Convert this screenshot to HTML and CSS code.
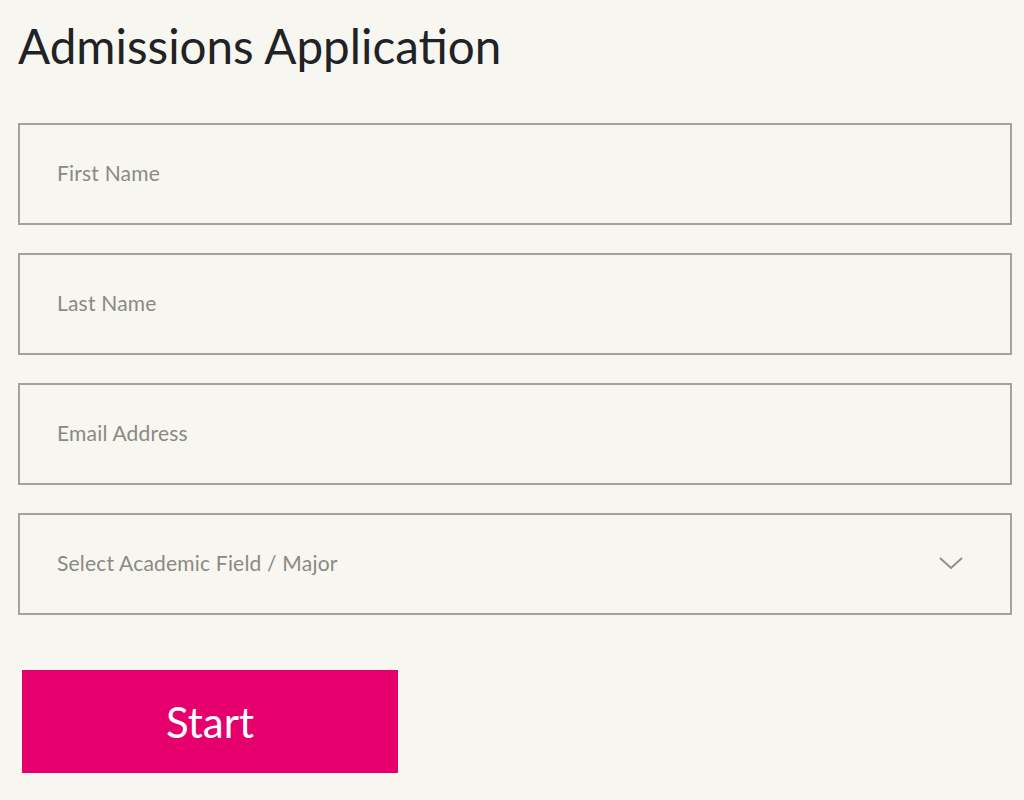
FILE: index.html
```html
<!DOCTYPE html>
<html lang="en">
<head>
<meta charset="utf-8">
<title>Admissions Application</title>
<link rel="stylesheet" href="styles.css">
</head>
<body>
<main class="page">
  <h1 class="title">Admissions Application</h1>
  <form class="form">
    <div class="field"><span class="placeholder">First Name</span></div>
    <div class="field"><span class="placeholder">Last Name</span></div>
    <div class="field"><span class="placeholder">Email Address</span></div>
    <div class="field select">
      <span class="placeholder">Select Academic Field / Major</span>
      <svg class="chevron" width="26" height="16" viewBox="0 0 26 16"><path d="M2 3 L13 13 L24 3" fill="none" stroke="#8f8f88" stroke-width="2"/></svg>
    </div>
    <button type="button" class="start">Start</button>
  </form>
</main>
</body>
</html>
```

FILE: styles.css
```css
html, body {
  margin: 0;
  padding: 0;
  background: #f7f6f0;
}
body {
  font-family: Lato, "Open Sans", sans-serif;
}
.page {
  padding: 18px 12px 0 18px;
}
.title {
  margin: 0;
  font-weight: 400;
  font-size: 47.6px;
  line-height: 56px;
  color: #1f2326;
}
.form {
  margin-top: 49px;
  display: flex;
  flex-direction: column;
  gap: 28px;
}
.field {
  box-sizing: border-box;
  height: 102px;
  border: 2px solid #a3a39b;
  display: flex;
  align-items: center;
  padding-left: 37px;
  padding-right: 46px;
  padding-bottom: 3px;
}
.placeholder {
  font-size: 21px;
  color: #8a8a82;
  letter-spacing: 0.2px;
}
.select {
  justify-content: space-between;
}
.chevron {
  display: block;
  margin-top: 1px;
}
.start {
  margin-top: 27px;
  margin-left: 4px;
  width: 376px;
  height: 103px;
  border: none;
  background: #e6006e;
  color: #ffffff;
  font-family: Lato, "Open Sans", sans-serif;
  font-size: 42px;
  padding: 0;
  cursor: pointer;
}
```
